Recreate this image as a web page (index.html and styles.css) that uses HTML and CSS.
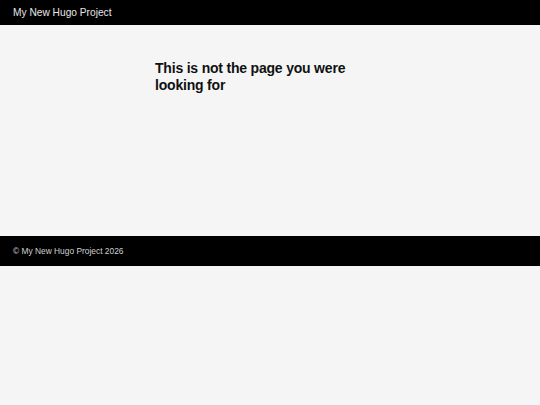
FILE: index.html
```html
<!DOCTYPE html>
<html lang="en">

<head>
    <meta charset="UTF-8">
    <meta name="viewport" content="width=device-width, initial-scale=1.0">
    <title>404 Page not found | My New Hugo Project</title>
    <link rel="stylesheet" href="styles.css">
</head>

<body>
    <header class="site-header">
        <h1>My New Hugo Project</h1>
    </header>

    <main class="site-main">
        <h1>This is not the page you were looking for</h1>
    </main>

    <footer class="site-footer">
        <p>&copy; My New Hugo Project 2026</p>
    </footer>
</body>

</html>
```

FILE: styles.css
```css
body {
    margin: 0;
    font-family: "Liberation Sans", Arial, sans-serif;
    background-color: #f5f5f5;
    color: #111;
}

.site-header {
    background-color: #000;
    height: 25px;
    padding: 0 13px;
    display: flex;
    align-items: center;
}

.site-header h1 {
    margin: 0;
    font-size: 10.2px;
    font-weight: normal;
    color: #e6e6e6;
}

.site-main {
    width: 230px;
    margin: 0 auto;
    height: 211px;
    padding-top: 35px;
    box-sizing: border-box;
}

.site-main h1 {
    margin: 0;
    font-size: 14px;
    line-height: 17px;
    font-weight: bold;
    letter-spacing: -0.2px;
}

.site-footer {
    background-color: #000;
    height: 30px;
    padding: 0 13px;
    display: flex;
    align-items: center;
}

.site-footer p {
    margin: 0;
    font-size: 8.4px;
    color: #d0d0d0;
}
```
